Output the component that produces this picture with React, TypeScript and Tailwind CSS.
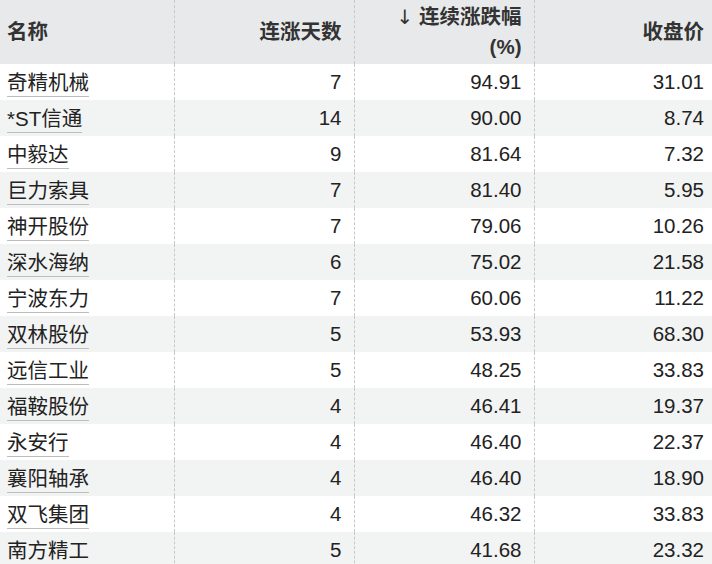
const rows = [
  { name: "奇精机械", days: 7, pct: "94.91", close: "31.01" },
  { name: "*ST信通", days: 14, pct: "90.00", close: "8.74" },
  { name: "中毅达", days: 9, pct: "81.64", close: "7.32" },
  { name: "巨力索具", days: 7, pct: "81.40", close: "5.95" },
  { name: "神开股份", days: 7, pct: "79.06", close: "10.26" },
  { name: "深水海纳", days: 6, pct: "75.02", close: "21.58" },
  { name: "宁波东力", days: 7, pct: "60.06", close: "11.22" },
  { name: "双林股份", days: 5, pct: "53.93", close: "68.30" },
  { name: "远信工业", days: 5, pct: "48.25", close: "33.83" },
  { name: "福鞍股份", days: 4, pct: "46.41", close: "19.37" },
  { name: "永安行", days: 4, pct: "46.40", close: "22.37" },
  { name: "襄阳轴承", days: 4, pct: "46.40", close: "18.90" },
  { name: "双飞集团", days: 4, pct: "46.32", close: "33.83" },
  { name: "南方精工", days: 5, pct: "41.68", close: "23.32" },
];

export default function App() {
  return (
    <div
      className="w-[712px] h-[564px] overflow-hidden bg-white text-[20.5px] text-[#222]"
      style={{ fontFamily: '"Liberation Sans", "Noto Sans CJK SC", sans-serif' }}
    >
      <table className="table-fixed w-[714px] border-collapse">
        <colgroup>
          <col className="w-[174px]" />
          <col className="w-[180px]" />
          <col className="w-[180px]" />
          <col className="w-[180px]" />
        </colgroup>
        <thead>
          <tr className="h-[64px] bg-[#e8e9eb] text-[#333] font-bold">
            <th className="text-left pl-[7px] pr-3 align-middle">名称</th>
            <th className="text-right pr-3 border-l border-dashed border-[#c8c8c8]">连涨天数</th>
            <th className="text-right pr-3 border-l border-dashed border-[#c8c8c8] leading-[30px]">
              <span className="block">
                <span className="font-normal text-[20px] font-['DejaVu_Sans',sans-serif]">↓</span> 连续涨跌幅
              </span>
              <span className="block">(%)</span>
            </th>
            <th className="text-right pr-[10px] border-l border-dashed border-[#c8c8c8]">收盘价</th>
          </tr>
        </thead>
        <tbody>
          {rows.map((r, i) => (
            <tr key={i} className={`h-[36px] ${i % 2 === 1 ? "bg-[#f2f3f3]" : "bg-white"}`}>
              <td className="pl-[7px] pr-3 align-middle">
                <span className="inline-block leading-[26px] border-b border-[#bdbdbd] align-middle">
                  {r.name}
                </span>
              </td>
              <td className="text-right pr-3 border-l border-dashed border-[#c8c8c8]">{r.days}</td>
              <td className="text-right pr-3 border-l border-dashed border-[#c8c8c8]">{r.pct}</td>
              <td className="text-right pr-[10px] border-l border-dashed border-[#c8c8c8]">{r.close}</td>
            </tr>
          ))}
        </tbody>
      </table>
    </div>
  );
}
